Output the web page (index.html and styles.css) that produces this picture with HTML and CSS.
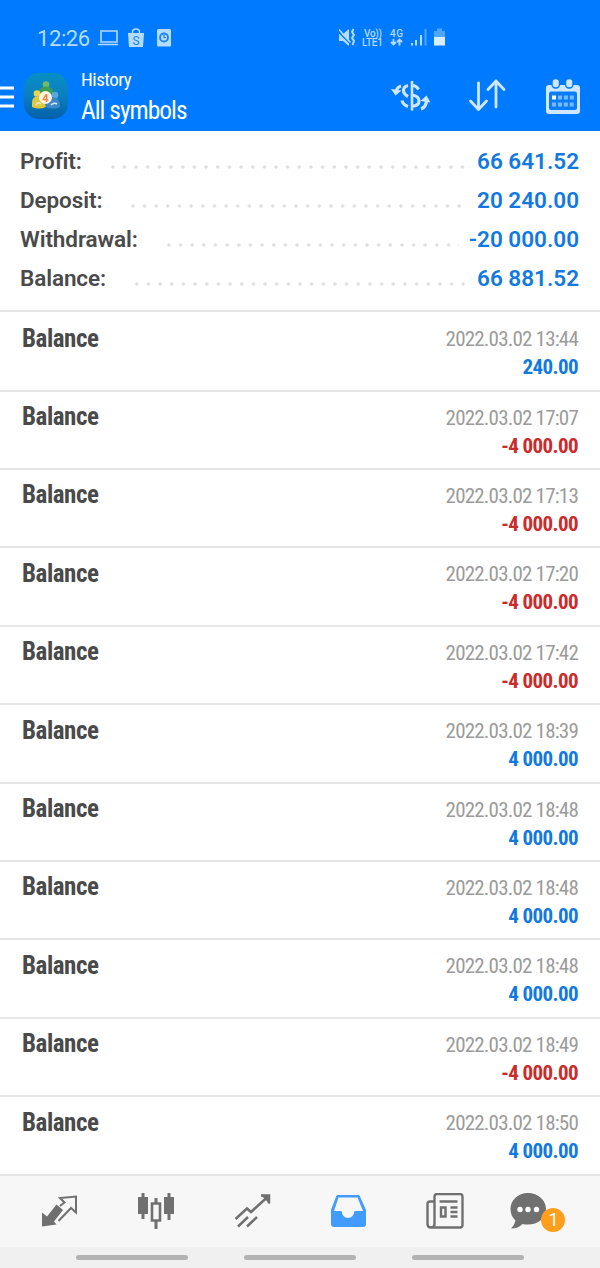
FILE: index.html
```
<!DOCTYPE html>
<html>

	<head>
		<meta charset="UTF-8">
		<title>History</title>
		<link rel="stylesheet" href="styles.css">
	</head>

	<body>
		<div class="top">
			<div class="status">
				<span class="time">12:26</span>
				<svg class="status-left" width="78" height="22" viewBox="0 0 78 22">
					<path d="M4 4h16v11H4zM1 17.5h20" fill="none" stroke="#b4dcff" stroke-width="1.6" />
					<path d="M31 6h16l-1 14H32z" fill="#b4dcff" />
					<path d="M35.500 7V5q0-3 3.500-3t3.500 3v2" fill="none" stroke="#b4dcff" stroke-width="1.500" />
					<text x="39" y="18" class="bag-letter">S</text>
					<rect x="60" y="2" width="14" height="17.500" rx="1.500" fill="#b4dcff" />
					<circle cx="67" cy="10.500" r="4" fill="none" stroke="#1a83f5" stroke-width="1.800" />
					<path d="M67 8v2.500h2" fill="none" stroke="#1a83f5" stroke-width="1.200" />
				</svg>
				<svg class="status-right" width="112" height="22" viewBox="0 0 112 22">
					<path d="M0 7h4l6-5v17l-6-5H0z" fill="#b4dcff" />
					<path d="M-1 4.500l12 12" stroke="#007aff" stroke-width="1.300" />
					<path d="M0 2.500l11.500 13" stroke="#b4dcff" stroke-width="1.500" />
					<path d="M14.500 2l-1.500 3 2 3-2 3 2 3-1.500 4" fill="none" stroke="#b4dcff" stroke-width="2" />
					<text x="25" y="9.500" class="tiny" textLength="18">Vo))</text>
					<text x="23" y="19" class="tiny" textLength="21">LTE1</text>
					<text x="51" y="9.500" class="tiny" textLength="13">4G</text>
					<path d="M54.500 12v6M52 15l2.500 2.500L57 15M60.500 18.500v-6M58 15l2.500-2.500L63 15" fill="none" stroke="#b4dcff" stroke-width="1.900" />
					<path d="M73 16v2.500M77 13v5.500M82 8v10.500" stroke="#b4dcff" stroke-width="2" />
					<path d="M86.500 2v16.500" stroke="#4fa6ff" stroke-width="2" />
					<path d="M95 4h3V1.500h5V4h3v6H95z" fill="#4fa6ff" />
					<path d="M95 10h11v8.500H95z" fill="#d9edff" />
				</svg>
			</div>
			<div class="bar">
				<svg class="menu" width="14" height="24" viewBox="0 0 14 24">
					<path d="M0 3h14M0 12h14M0 21h14" stroke="#fff" stroke-width="3" />
				</svg>
				<svg class="logo" width="46" height="48" viewBox="0 0 46 48">
					<defs>
						<linearGradient id="sky" x1="0" y1="0" x2="0" y2="1">
							<stop offset="0" stop-color="#078fc4" />
							<stop offset=".5" stop-color="#0a7fc0" />
							<stop offset="1" stop-color="#0560a8" />
						</linearGradient>
					</defs>
					<rect x="1" y="1" width="44" height="46" rx="15" fill="url(#sky)" />
					<circle cx="23" cy="12.500" r="3.300" fill="#72bb63" />
					<path d="M15 23q0-8.500 8-8.500t8 8.500z" fill="#3c9c58" />
					<circle cx="14" cy="21.500" r="3.300" fill="#e6d64c" />
					<path d="M9 35q-1-11 6-11 6 0 8 11-7 3-14 0z" fill="#dfc73e" />
					<circle cx="32" cy="23" r="3.300" fill="#5fa5df" />
					<path d="M23 35q0-10 7-10t7 10q-7 3-14 0z" fill="#3d87cb" />
					<path d="M13 33q2-4 5-1M28 33q3-3 6-1" fill="none" stroke="#d8ecd8" stroke-width="1.600" />
					<circle cx="22.500" cy="25.500" r="6.500" fill="#fff4df" />
					<text x="22.500" y="29.500" class="logo-num">4</text>
				</svg>
				<div class="titles">
					<div class="small-title">History</div>
					<div class="big-title">All symbols</div>
				</div>
				<div class="actions">
					<svg width="40" height="34" viewBox="0 0 40 34" fill="none" stroke="#cfe8ff" stroke-width="3.200">
						<path d="M21 2v29.500" stroke-width="2.600" />
						<path d="M27.500 10.500q-2-4-6.500-4M21 16q7 1 7 6t-7 5M17 6.500q-4.500 1-4.500 5 0 3.500 4.500 6M11 21.500q1 4.500 6 6" />
						<path d="M10 7q-4 1-5 6" />
						<path d="M0 10l4.500 6.500 6-5z" fill="#cfe8ff" stroke="none" />
						<path d="M30 30q5-2 5.500-8" />
						<path d="M29.500 22l6-5.500 4 7z" fill="#cfe8ff" stroke="none" />
					</svg>
					<svg width="38" height="34" viewBox="0 0 38 34" fill="none" stroke="#cfe8ff" stroke-width="2.800" stroke-linecap="round" stroke-linejoin="round">
						<path d="M9.500 4v26M1.500 22l8 8.500 8-8.500M27 28V2M19 10.500L27 2l8 8.500" />
					</svg>
					<svg width="36" height="38" viewBox="0 0 36 38">
						<path d="M4 8h28q3 0 3 3v23q0 3-3 3H4q-3 0-3-3V11q0-3 3-3z" fill="#cfe8ff" />
						<rect x="4" y="14.500" width="28" height="18.500" rx="2" fill="#0a7dfb" />
						<rect x="7" y="1.500" width="7.500" height="9.500" rx="3.500" fill="#cfe8ff" stroke="#007aff" stroke-width="1.400" />
						<rect x="20.500" y="1.500" width="7.500" height="9.500" rx="3.500" fill="#cfe8ff" stroke="#007aff" stroke-width="1.400" />
						<path d="M7 20.500h4" stroke="#fff" stroke-width="4" />
						<path d="M13 20.500h16" stroke="#78baff" stroke-width="4" stroke-dasharray="4 1.900" />
						<path d="M7 27.500h22" stroke="#78baff" stroke-width="4" stroke-dasharray="4 1.900" />
					</svg>
				</div>
			</div>
		</div>

		<div class="summary">
			<div class="line"><span>Profit:</span><i class="dots"></i><b>66 641.52</b></div>
			<div class="line"><span>Deposit:</span><i class="dots"></i><b>20 240.00</b></div>
			<div class="line"><span>Withdrawal:</span><i class="dots"></i><b>-20 000.00</b></div>
			<div class="line"><span>Balance:</span><i class="dots"></i><b>66 881.52</b></div>
		</div>

		<div class="list">
			<div class="deal first">
				<div class="name">Balance</div>
				<div class="info"><div class="date">2022.03.02 13:44</div><div class="plus">240.00</div></div>
			</div>
			<div class="deal">
				<div class="name">Balance</div>
				<div class="info"><div class="date">2022.03.02 17:07</div><div class="minus">-4 000.00</div></div>
			</div>
			<div class="deal">
				<div class="name">Balance</div>
				<div class="info"><div class="date">2022.03.02 17:13</div><div class="minus">-4 000.00</div></div>
			</div>
			<div class="deal">
				<div class="name">Balance</div>
				<div class="info"><div class="date">2022.03.02 17:20</div><div class="minus">-4 000.00</div></div>
			</div>
			<div class="deal">
				<div class="name">Balance</div>
				<div class="info"><div class="date">2022.03.02 17:42</div><div class="minus">-4 000.00</div></div>
			</div>
			<div class="deal">
				<div class="name">Balance</div>
				<div class="info"><div class="date">2022.03.02 18:39</div><div class="plus">4 000.00</div></div>
			</div>
			<div class="deal">
				<div class="name">Balance</div>
				<div class="info"><div class="date">2022.03.02 18:48</div><div class="plus">4 000.00</div></div>
			</div>
			<div class="deal">
				<div class="name">Balance</div>
				<div class="info"><div class="date">2022.03.02 18:48</div><div class="plus">4 000.00</div></div>
			</div>
			<div class="deal">
				<div class="name">Balance</div>
				<div class="info"><div class="date">2022.03.02 18:48</div><div class="plus">4 000.00</div></div>
			</div>
			<div class="deal">
				<div class="name">Balance</div>
				<div class="info"><div class="date">2022.03.02 18:49</div><div class="minus">-4 000.00</div></div>
			</div>
			<div class="deal">
				<div class="name">Balance</div>
				<div class="info"><div class="date">2022.03.02 18:50</div><div class="plus">4 000.00</div></div>
			</div>
		</div>

		<div class="tabs">
			<svg width="40" height="40" viewBox="0 0 40 40">
				<path d="M2 19.500l5 4 9.500-12 6.500 5.500-9 11.500 2.500 3L2 33.500z" fill="#707070" />
				<path d="M18.500 28L31 15l5 4.500V3.500L20 5l4.500 4.500L20 13" fill="none" stroke="#707070" stroke-width="2" />
			</svg>
			<svg width="40" height="40" viewBox="0 0 40 40">
				<path d="M7 0v26M20 5v31M33 0v27" stroke="#707070" stroke-width="3" />
				<path d="M2 4h10v17H2zM28 4h10v17H28z" fill="#707070" />
				<path d="M16 10.500h8v17h-8z" fill="#f7f7f7" stroke="#707070" stroke-width="2.600" />
			</svg>
			<svg width="40" height="40" viewBox="0 0 40 40" fill="none" stroke="#707070" stroke-width="2.500">
				<path d="M2.500 26L14 15.500l4 3.500L35 3.500M28 2.500h8v8M5 33.500l10-9.500M14 33.500L24 24" />
				<path d="M28 2h8.500v9z" fill="#707070" stroke="none" />
			</svg>
			<svg width="40" height="40" viewBox="0 0 40 40">
				<path d="M8 2.500h22L36.500 17v14.500q0 2-2 2h-30q-2 0-2-2V17z" fill="#429bff" stroke="#429bff" stroke-width="1" stroke-linejoin="round" />
				<path d="M9.500 4.500h19L34 18H25.500q-1 7-6.500 7t-6.500-7H5z" fill="#f7f7f7" />
			</svg>
			<svg width="40" height="40" viewBox="0 0 40 40" fill="none" stroke="#707070" stroke-width="2.400">
				<path d="M8.500 8.500H5Q2.500 8.500 2.500 11v20q0 3.500 3.500 3.500h29q2.500 0 2.500-2.500V3.500Q37.500 1 35 1H12q-2.500 0-2.500 2.500V31q0 3.500-3.500 3.500" />
				<path d="M14.500 8.500h18M16 14.500h4.500v9H16zM25.500 14.500h7M25.500 19h7M25.500 23.500h7" />
			</svg>
			<div class="chat">
				<svg width="40" height="40" viewBox="0 0 40 40">
					<path d="M19 0C9 0 1.500 7 1.500 16c0 5 2 9 5 11.500Q5.500 32.500 2 35.500q7 0 11.500-4.500 2 .6 5.500.600C29 31.600 37 25 37 16S29 0 19 0z" fill="#707070" />
					<circle cx="11" cy="16.500" r="2.700" fill="#fff" />
					<circle cx="19" cy="16.500" r="2.700" fill="#fff" />
					<circle cx="27.500" cy="16.500" r="2.700" fill="#fff" />
				</svg>
				<span class="badge">1</span>
			</div>
		</div>
		<div class="nav">
			<div></div>
			<div></div>
			<div></div>
		</div>
	</body>

</html>
```
FILE: styles.css
```
* {
	margin: 0;
	box-sizing: border-box;
}

body {
	width: 600px;
	height: 1268px;
	background: #fff;
	font-family: Roboto, sans-serif;
	overflow: hidden;
}

svg {
	display: block;
	flex: none;
}

.top {
	height: 131px;
	background: #007aff;
	padding-top: 26px;
}

.status {
	display: flex;
	height: 24px;
	padding-left: 37px;
}

.time {
	width: 60px;
	font-size: 22px;
	line-height: 25px;
	letter-spacing: -0.4px;
	color: #b4dcff;
}

.status-left {
	margin-top: 1px;
}

.status-right {
	margin: 1px 0 0 164px;
}

.bag-letter {
	font-size: 12px;
	text-anchor: middle;
	fill: #1a83f5;
}

.tiny {
	font-size: 10px;
	font-weight: 500;
	fill: #b4dcff;
}

.bar {
	display: flex;
	align-items: center;
	height: 81px;
}

.menu {
	margin-top: 12px;
}

.logo {
	margin: 10px 0 0 9px;
}

.logo-num {
	font-size: 11px;
	font-weight: 700;
	text-anchor: middle;
	fill: #ea8447;
}

.titles {
	margin-left: 12px;
	padding-top: 14px;
	color: #fff;
	font-stretch: 75%;
	white-space: nowrap;
}

.small-title {
	font-size: 19px;
	line-height: 24px;
	letter-spacing: -0.5px;
}

.big-title {
	font-size: 25.500px;
	line-height: 36px;
	letter-spacing: -1px;
}

.actions {
	display: flex;
	align-items: center;
	gap: 38px;
	margin: 10px 19px 0 auto;
}

.summary {
	height: 180.600px;
	padding: 11px 21px 0 20px;
	border-bottom: 2px solid #e6e6e6;
}

.line {
	display: flex;
	height: 39px;
	line-height: 39px;
	font-size: 22.500px;
	font-weight: 600;
	color: #4a4a4a;
}

.line span {
	letter-spacing: -0.100px;
}

.line b {
	font-weight: 600;
	color: #1279e0;
}

.dots {
	flex: 1;
	margin: 21px 10px 0 25px;
	height: 8px;
	background: radial-gradient(circle, #dedede 1.300px, transparent 2px) 0 0 / 11.670px 8px repeat-x;
}

.deal {
	display: flex;
	justify-content: space-between;
	height: 78.400px;
	padding: 10.500px 22px 0;
	border-bottom: 2px solid #e6e6e6;
	font-stretch: 75%;
}

.first {
	height: 80px;
	padding-top: 12px;
}

.name {
	font-size: 25px;
	line-height: 30px;
	font-weight: 700;
	letter-spacing: -0.450px;
	color: #4a4a4a;
}

.info {
	padding-top: 1.500px;
	font-size: 21px;
	line-height: 28px;
	letter-spacing: -0.600px;
	text-align: right;
}

.date {
	letter-spacing: -0.800px;
	color: #9b9b9b;
}

.plus {
	font-weight: 700;
	color: #1279e0;
}

.minus {
	font-weight: 700;
	color: #cb2b2b;
}

.tabs {
	display: flex;
	gap: 56.300px;
	height: 71px;
	padding: 17px 0 0 40px;
	background: #f7f7f7;
}

.chat {
	position: relative;
	margin-left: -12px;
}

.badge {
	position: absolute;
	left: 32px;
	top: 15px;
	width: 24px;
	height: 24px;
	border-radius: 50%;
	background: #ff9d1c;
	color: #fff;
	font-size: 19px;
	line-height: 24px;
	text-align: center;
}

.nav {
	display: flex;
	justify-content: center;
	gap: 56px;
	height: 22px;
	padding-top: 8px;
	background: #f0f0f0;
}

.nav div {
	width: 112px;
	height: 5px;
	border-radius: 3px;
	background: #b3b3b3;
}
```
